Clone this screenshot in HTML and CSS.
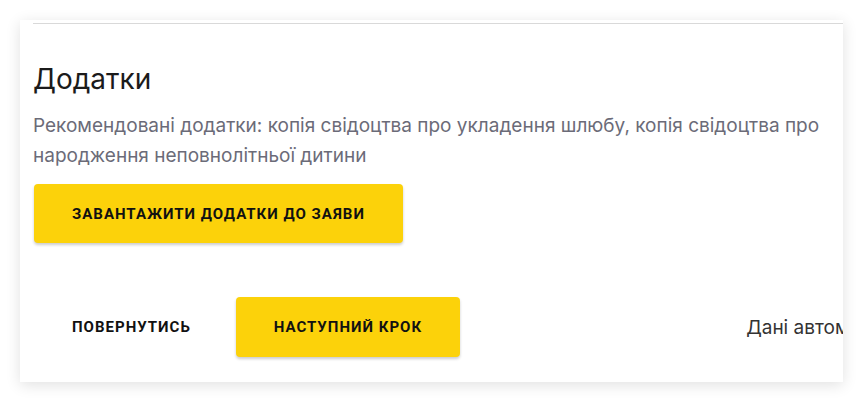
FILE: index.html
```html
<!DOCTYPE html>
<html lang="uk">
<head>
    <meta charset="UTF-8">
    <meta name="viewport" content="width=device-width, initial-scale=1.0">
    <title>Додатки</title>
    <link rel="stylesheet" href="styles.css">
</head>
<body>

<div class="card">
    <div class="section">
        <h2>Додатки</h2>
        <p class="hint">Рекомендовані додатки: копія свідоцтва про укладення шлюбу, копія свідоцтва про народження неповнолітньої дитини</p>
        <button class="btn btn-yellow upload-btn">Завантажити додатки до заяви</button>
    </div>
    <div class="actions">
        <button class="btn btn-text">Повернутись</button>
        <button class="btn btn-yellow">Наступний крок</button>
        <span class="saved">Дані автоматично збережено</span>
    </div>
</div>

</body>
</html>
```

FILE: styles.css
```css
body {
    margin: 0;
    padding: 20px;
    background-color: #ffffff;
    font-family: Inter, "Noto Sans", sans-serif;
}
.card {
    width: 823px;
    height: 362px;
    box-sizing: border-box;
    background-color: white;
    box-shadow: 0 3px 14px rgba(0, 0, 0, 0.12);
    overflow: hidden;
    padding: 3px 0 0 13px;
}
.section {
    border-top: 1px solid #d9d9d9;
    padding-right: 10px;
}
h2 {
    margin: 38px 0 0;
    font-size: 28px;
    font-weight: 400;
    line-height: 34px;
    color: #1b1b1b;
}
.hint {
    margin: 15px 0 0;
    font-size: 19px;
    line-height: 30px;
    color: #6b6b78;
}
.btn {
    font-family: Roboto, sans-serif;
    font-size: 15px;
    font-weight: 700;
    letter-spacing: 1px;
    text-transform: uppercase;
    color: #111;
    border: none;
    border-radius: 4px;
    padding: 0 38px;
    height: 59px;
    cursor: pointer;
}
.btn-yellow {
    background-color: #fcd20a;
    box-shadow: 0 2px 3px rgba(0, 0, 0, 0.2);
}
.btn-text {
    background: none;
}
.upload-btn {
    margin: 13px 0 0 1px;
}
.actions {
    display: flex;
    align-items: center;
    gap: 7px;
    margin: 54px 0 0 1px;
    white-space: nowrap;
}
.actions .btn-yellow {
    height: 60px;
}
.saved {
    margin-left: 279px;
    font-size: 19px;
    color: #333;
}
```
